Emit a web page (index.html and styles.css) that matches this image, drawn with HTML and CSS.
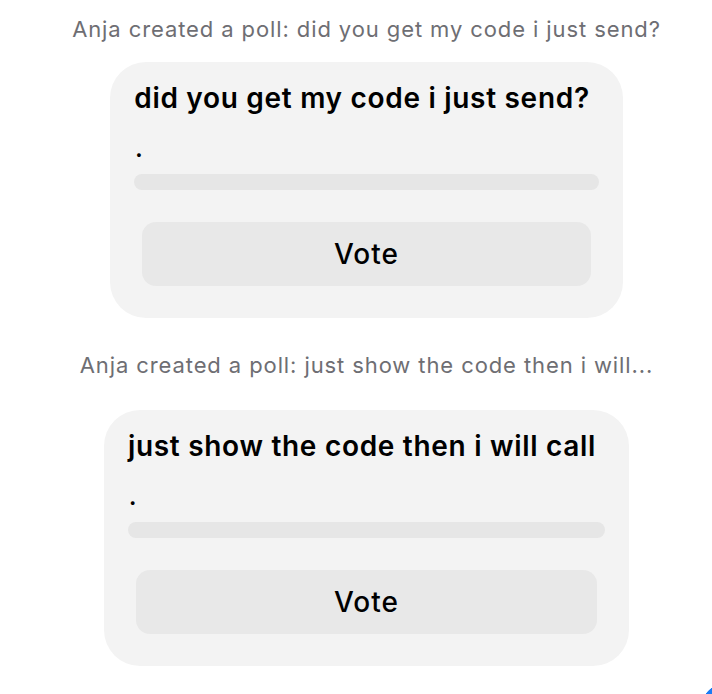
FILE: index.html
```html
<!DOCTYPE html>
<html>
<head>
<meta charset="utf-8">
<link rel="stylesheet" href="styles.css">
</head>
<body>
<div class="feed">
  <div class="event">
    <p class="caption">Anja created a poll: did you get my code i just send?</p>
    <div class="poll">
      <h2 class="poll-title">did you get my code i just send?</h2>
      <div class="option-label">.</div>
      <div class="option-bar"></div>
      <button class="vote-btn">Vote</button>
    </div>
  </div>
  <div class="event event-second">
    <p class="caption">Anja created a poll: just show the code then i will...</p>
    <div class="poll">
      <h2 class="poll-title">just show the code then i will call</h2>
      <div class="option-label">.</div>
      <div class="option-bar"></div>
      <button class="vote-btn">Vote</button>
    </div>
  </div>
</div>
<div class="fab"></div>
</body>
</html>
```

FILE: styles.css
```css
html, body {
  margin: 0;
  padding: 0;
  background: #ffffff;
  overflow: hidden;
  width: 712px;
  height: 694px;
}
body {
  font-family: Inter, "Noto Sans", "Liberation Sans", sans-serif;
  color: #000;
  position: relative;
}
.feed {
  padding: 0 0 0 21px;
  display: flex;
  flex-direction: column;
  align-items: center;
}
.event {
  display: flex;
  flex-direction: column;
  align-items: center;
}
.caption {
  margin: 16px 0 0;
  font-size: 22px;
  line-height: 26px;
  color: #6e6e73;
  letter-spacing: 0.9px;
  white-space: nowrap;
}
.event-second .caption {
  margin-top: 34px;
}
.poll {
  margin-top: 20px;
  background: #f3f3f3;
  border-radius: 36px;
  padding: 20px 24px 32px;
  width: fit-content;
  display: flex;
  flex-direction: column;
}
.event-second .poll {
  margin-top: 32px;
}
.poll-title {
  margin: 0;
  padding-right: 9px;
  font-size: 28px;
  line-height: 32px;
  font-weight: 600;
  white-space: nowrap;
  letter-spacing: 0.7px;
}
.option-label {
  margin-top: 23px;
  font-size: 22px;
  font-weight: 700;
  line-height: 24px;
  padding-left: 1px;
}
.option-bar {
  margin-top: 13px;
  height: 16px;
  border-radius: 8px;
  background: #e6e6e6;
}
.vote-btn {
  margin: 32px 8px 0;
  height: 64px;
  border: none;
  border-radius: 14px;
  background: #e8e8e8;
  font-family: inherit;
  font-size: 28px;
  font-weight: 500;
  letter-spacing: 1px;
  color: #000;
  padding: 0;
}
.fab {
  position: absolute;
  left: 699px;
  top: 682px;
  width: 13px;
  height: 12px;
  background: radial-gradient(circle at 31px 30px, #1a7cf5 30px, transparent 30.6px);
}
```
